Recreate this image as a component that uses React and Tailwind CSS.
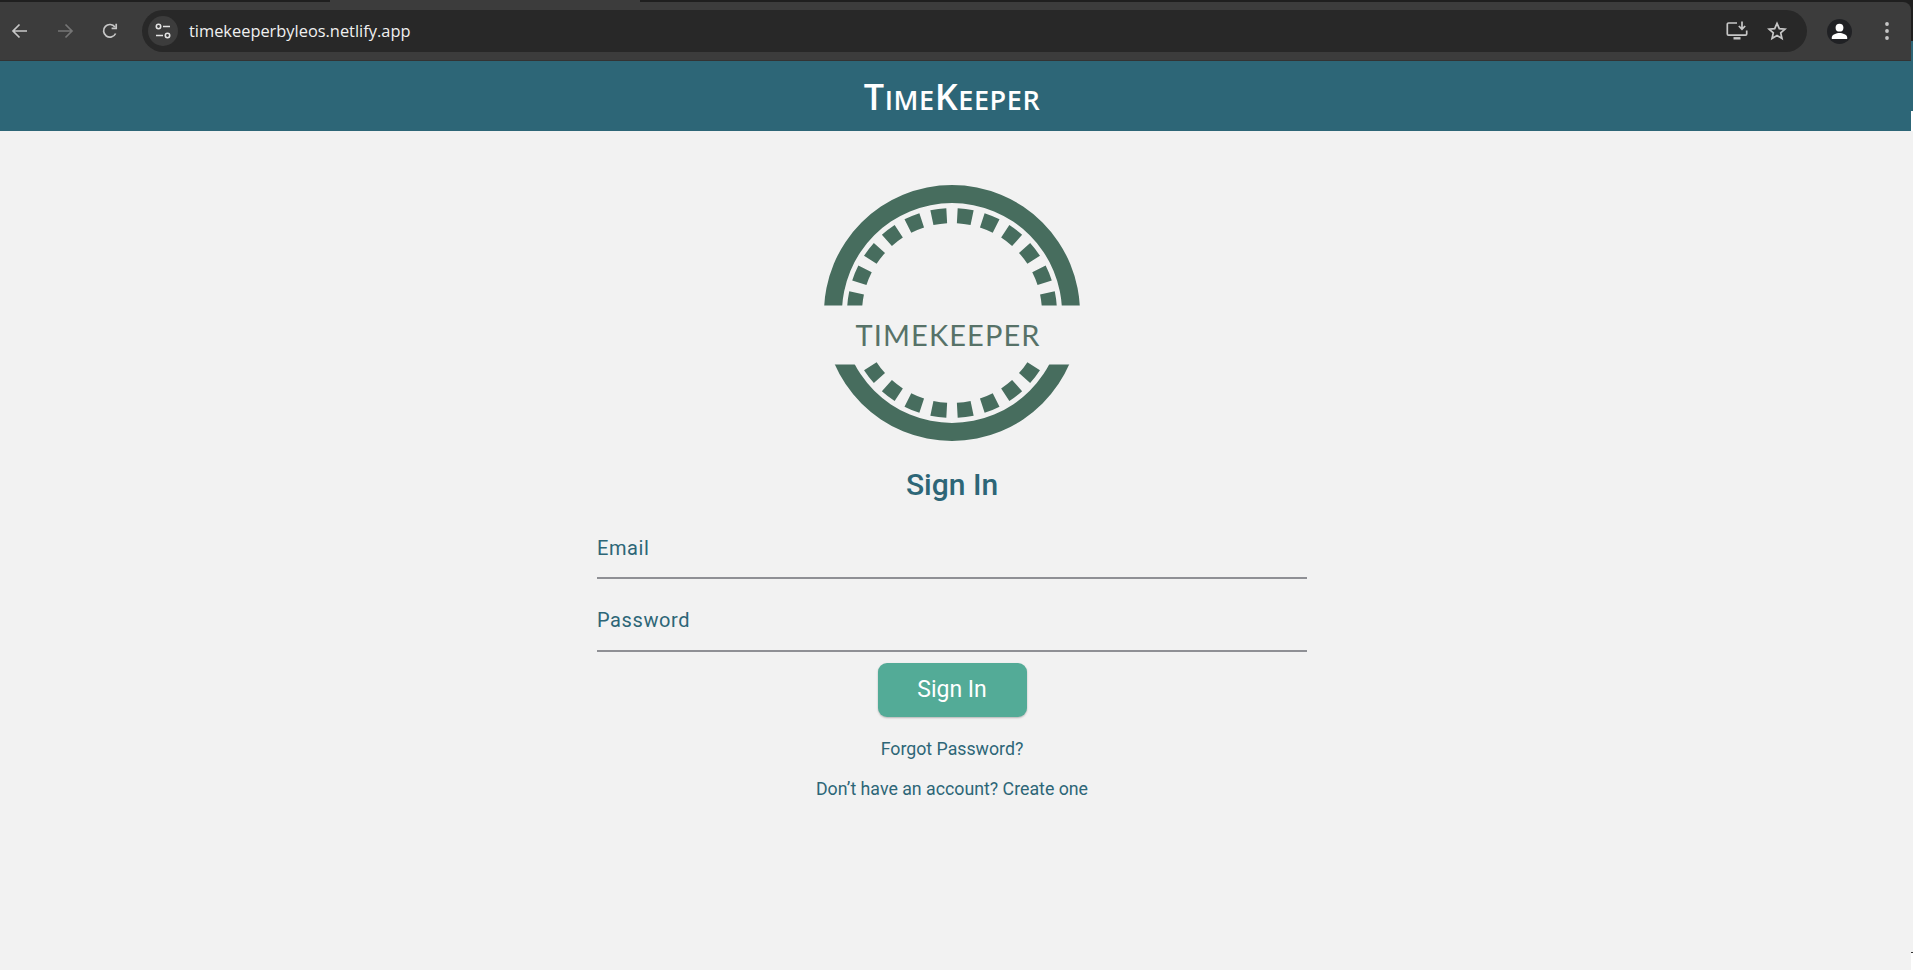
import React from "react";

const topAngles = [7.5, 22.5, 37.5, 52.5, 67.5, 82.5];
const bottomAngles = [7.5, 22.5, 37.5, 52.5];

function tick(angleDeg, fromBottom, key) {
  const half = 4.4 * Math.PI / 180;
  const a = angleDeg * Math.PI / 180;
  const r1 = 90, r2 = 105;
  const p = (r, t) => {
    const x = r * Math.sin(t);
    const y = (fromBottom ? 1 : -1) * r * Math.cos(t);
    return `${x.toFixed(2)} ${y.toFixed(2)}`;
  };
  return (
    <path
      key={key}
      d={`M${p(r1, a - half)} L${p(r2, a - half)} A105 105 0 0 ${fromBottom ? 0 : 1} ${p(r2, a + half)} L${p(r1, a + half)} A90 90 0 0 ${fromBottom ? 1 : 0} ${p(r1, a - half)}Z`}
    />
  );
}

function Logo() {
  return (
    <svg width="258" height="258" viewBox="-129 -129 258 258" className="block">
      <defs>
        <clipPath id="top-clip"><rect x="-130" y="-130" width="260" height="122.5" /></clipPath>
        <clipPath id="bottom-clip"><rect x="-130" y="51.5" width="260" height="80" /></clipPath>
      </defs>
      <g fill="#476d5e">
        <g clipPath="url(#top-clip)">
          <path d="M-128 0A128 128 0 0 1 128 0H110A110 110 0 0 0 -110 0Z" />
          {topAngles.flatMap((a) => [tick(a, false, `tr${a}`), tick(-a, false, `tl${a}`)])}
        </g>
        <g clipPath="url(#bottom-clip)">
          <path d="M-128 0A128 128 0 0 0 128 0H110A110 110 0 0 1 -110 0Z" />
        </g>
        {bottomAngles.flatMap((a) => [tick(a, true, `br${a}`), tick(-a, true, `bl${a}`)])}
      </g>
      <text
        x="-96.5"
        y="33"
        textLength="184"
        lengthAdjust="spacing"
        fill="#577268"
        style={{ fontFamily: '"Lato", sans-serif', fontSize: 29, fontWeight: 400 }}
      >
        TIMEKEEPER
      </text>
    </svg>
  );
}

const Back = () => (
  <svg width="20" height="20" viewBox="0 0 20 20" fill="none" stroke="#c7c7c7" strokeWidth="1.7">
    <path d="M17 10H3.500M9.500 3.500 3 10l6.500 6.500" />
  </svg>
);

const Forward = () => (
  <svg width="20" height="20" viewBox="0 0 20 20" fill="none" stroke="#757575" strokeWidth="1.7">
    <path d="M3 10h13.500M10.500 3.500 17 10l-6.500 6.500" />
  </svg>
);

const Reload = () => (
  <svg width="20" height="20" viewBox="0 0 20 20" fill="none" stroke="#c7c7c7" strokeWidth="1.7">
    <path d="M15.600 12.500A6.300 6.300 0 1 1 15 6.100" />
    <path d="M16.200 2.800v4.600h-4.600" />
  </svg>
);

const Tune = () => (
  <svg width="18" height="18" viewBox="0 0 18 18" fill="none" stroke="#e3e3e3" strokeWidth="1.600">
    <circle cx="4.500" cy="4.500" r="2.200" />
    <path d="M9 4.500h7M2 13.500h7" />
    <circle cx="13.500" cy="13.500" r="2.200" />
  </svg>
);

const Install = () => (
  <svg width="22" height="20" viewBox="0 0 22 20" fill="none" stroke="#c7c7c7" strokeWidth="1.7">
    <path d="M11 2H2.500A1.200 1.200 0 0 0 1.300 3.200V13a1.200 1.200 0 0 0 1.200 1.200h17A1.200 1.200 0 0 0 20.700 13V9.500" />
    <path d="M7.500 17.300h7" strokeWidth="2.400" />
    <path d="M16 .5v7.500M12.800 5l3.200 3.200L19.200 5" />
  </svg>
);

const Star = () => (
  <svg width="20" height="20" viewBox="0 0 20 20" fill="none" stroke="#c7c7c7" strokeWidth="1.7">
    <path d="M10 2.300l2.300 5.300 5.700.5-4.300 3.800 1.300 5.600-5-3-5 3 1.300-5.600L2 8.100l5.700-.5z" />
  </svg>
);

const Avatar = () => (
  <div className="flex h-[25px] w-[25px] items-center justify-center rounded-full bg-[#202124]">
    <svg width="17" height="17" viewBox="0 0 17 17" fill="#ffffff">
      <circle cx="8.500" cy="4.700" r="3.900" />
      <path d="M.8 16v-1.600C.8 11.600 5.500 10 8.500 10s7.700 1.600 7.700 4.400V16z" />
    </svg>
  </div>
);

const Dots = () => (
  <svg width="6" height="20" viewBox="0 0 6 20" fill="#c7c7c7">
    <circle cx="3" cy="3" r="1.900" />
    <circle cx="3" cy="10" r="1.900" />
    <circle cx="3" cy="17" r="1.900" />
  </svg>
);

export default function App() {
  return (
    <div className="flex h-[970px] w-[1913px] overflow-hidden bg-[#f2f2f2] font-['Roboto',sans-serif]">
      <div className="flex w-[1911px] flex-col">
        <div className="h-[61px] bg-[#1f1f1f]">
          <div className="flex h-[2px]">
            <div className="w-[330px]" />
            <div className="w-[310px] bg-[#3c3c3c]" />
          </div>
          <div className="flex h-[59px] items-center rounded-tr-[8px] border-b border-[#333333] bg-[#3c3c3c] pl-[10px]">
            <div className="flex w-[132px] items-center gap-[25px]">
              <Back />
              <Forward />
              <Reload />
            </div>
            <div className="flex h-[42px] w-[1665px] items-center rounded-full bg-[#282828] pl-[6px] pr-[20px]">
              <div className="flex h-[30px] w-[30px] items-center justify-center rounded-full bg-[#3c3c3c]">
                <Tune />
              </div>
              <span className="ml-[11px] font-['Open_Sans',sans-serif] text-[16.400px] text-[#f0f0f0]">
                timekeeperbyleos.netlify.app
              </span>
              <div className="ml-auto flex items-center gap-[19px]">
                <Install />
                <Star />
              </div>
            </div>
            <div className="ml-[20px]"><Avatar /></div>
            <div className="ml-[32px]"><Dots /></div>
          </div>
        </div>

        <header className="flex h-[70px] items-center justify-center bg-[#2d6677] pr-[7px] font-['Open_Sans',sans-serif] text-white">
          <div className="flex items-baseline pt-[2px] font-semibold tracking-[0.6px]">
            <span className="text-[36px] leading-none">T</span>
            <span className="text-[27px] leading-none">IME</span>
            <span className="text-[36px] leading-none">K</span>
            <span className="text-[27px] leading-none">EEPER</span>
          </div>
        </header>

        <main className="flex flex-col items-center pr-[7px] pt-[53px]">
          <Logo />
          <h1 className="mt-[25px] text-[30px] leading-[36px] font-medium text-[#2d6677]">Sign In</h1>
          <div className="mt-[18px] flex flex-col items-center gap-[15px]">
            <label className="flex h-[58px] w-[710px] border-b-2 border-[#8f9095] text-[20px] leading-[24px] tracking-[0.6px] text-[#2d6677]">
              <span className="pt-[15px]">Email</span>
            </label>
            <label className="flex h-[58px] w-[710px] border-b-2 border-[#8f9095] text-[20px] leading-[24px] tracking-[0.6px] text-[#2d6677]">
              <span className="pt-[14px]">Password</span>
            </label>
          </div>
          <button className="mt-[11px] h-[54px] w-[149px] rounded-[9px] bg-[#53ab97] text-[23px] text-white shadow-[0_1px_2px_rgba(0,0,0,0.25)]">
            Sign In
          </button>
          <a className="mt-[19px] text-[17.750px] leading-[26px] text-[#2d6677]">Forgot Password?</a>
          <a className="mt-[14px] text-[17.750px] leading-[26px] text-[#2d6677]">Don’t have an account? Create one</a>
        </main>
      </div>

      <div className="flex w-[2px] flex-col">
        <div className="h-[41px] bg-[#1f1f1f]" />
        <div className="h-[70px] bg-[#2d6677]" />
        <div className="h-[20px] bg-white" />
        <div className="h-[821px] bg-[#f2f2f2]" />
        <div className="h-[1px] bg-[#333333]" />
        <div className="flex-1 bg-white" />
      </div>
    </div>
  );
}
